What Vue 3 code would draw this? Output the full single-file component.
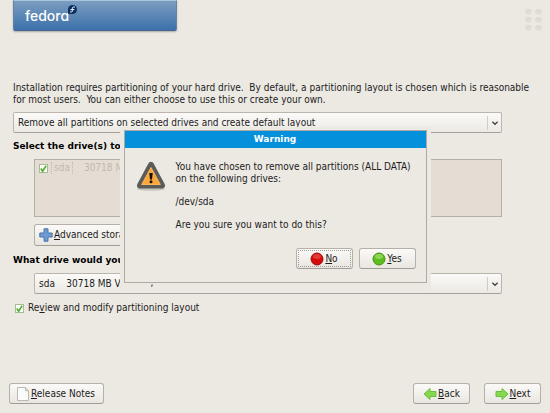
<script setup>
import { ref } from 'vue'

const layout = ref('remove-all')
const bootDrive = ref('sda')
const driveSelected = ref(true)
const review = ref(true)
</script>

<template>
  <div class="installer">
    <header class="top">
      <div class="banner">
        <span class="brand">fedora</span>
        <svg class="bubble" viewBox="0 0 20 20" aria-hidden="true">
          <path d="M10 0a10 10 0 1 1 0 20H2a2 2 0 0 1-2-2v-8A10 10 0 0 1 10 0z" fill="#0b2d63" />
          <path d="M14.5 4.6c-3-1.2-4.800.2-4.800 3v5c0 2.600-1.600 3.800-4.200 3M6.200 10.300h7" fill="none" stroke="#fff" stroke-width="2.2" stroke-linecap="round" />
        </svg>
      </div>
      <div class="dots" aria-hidden="true">
        <i v-for="n in 6" :key="n"></i>
      </div>
    </header>

    <main class="content">
      <p class="intro">Installation requires partitioning of your hard drive.&nbsp; By default, a partitioning layout is chosen which is reasonable for most users.&nbsp; You can either choose to use this or create your own.</p>

      <div class="combo">
        <select v-model="layout" aria-label="Partitioning layout">
          <option value="remove-all">Remove all partitions on selected drives and create default layout</option>
        </select>
        <svg class="chevron" viewBox="0 0 16 16" aria-hidden="true"><path d="M5 6.500l3 3 3-3" /></svg>
      </div>

      <h2 class="first">Select the drive(s) to use for this installation.</h2>
      <div class="indent">
        <div class="drives">
          <label class="drive">
            <span class="check">
              <input v-model="driveSelected" type="checkbox" />
              <svg v-if="driveSelected" viewBox="0 0 10 10" aria-hidden="true"><path d="M2 5l2 3 4-6" /></svg>
            </span>
            <span class="name">sda</span>
            <span class="model">30718 MB</span>
          </label>
        </div>
        <button class="btn advanced" type="button">
          <svg viewBox="0 0 14 14" aria-hidden="true"><path d="M5 .8h4V5h4.200v4H9v4.200H5V9H.8V5H5z" fill="#6f9bd0" stroke="#4776ac" /></svg>
          <span><u>A</u>dvanced storage configuration</span>
        </button>
      </div>

      <h2 class="second">What drive would you like to boot this installation from?</h2>
      <div class="indent">
        <div class="combo">
          <select v-model="bootDrive" aria-label="Boot drive">
            <option value="sda">sda&nbsp;&nbsp;&nbsp; 30718 MB VMware, VMware Virtual S</option>
          </select>
          <svg class="chevron" viewBox="0 0 16 16" aria-hidden="true"><path d="M5 6.500l3 3 3-3" /></svg>
        </div>
      </div>

      <label class="review">
        <span class="check">
          <input v-model="review" type="checkbox" />
          <svg v-if="review" viewBox="0 0 10 10" aria-hidden="true"><path d="M2 5l2 3 4-6" /></svg>
        </span>
        <span>Re<u>v</u>iew and modify partitioning layout</span>
      </label>
    </main>

    <footer class="actions">
      <button class="btn notes" type="button">
        <svg viewBox="0 0 14 14" aria-hidden="true">
          <path d="M1.500.5h8l3 3.500v9.500h-11z" fill="#fbfbfa" stroke="#b9b8b4" />
          <path d="M9.500.5V4h3z" fill="#dcdbd7" stroke="#b9b8b4" stroke-width=".7" />
        </svg>
        <span><u>R</u>elease Notes</span>
      </button>
      <div class="nav">
        <button class="btn" type="button">
          <svg viewBox="0 0 14 14" aria-hidden="true"><path d="M1 7l6-5.500v3h6v5H7v3z" fill="#85d94c" stroke="#6dbd40" /></svg>
          <span><u>B</u>ack</span>
        </button>
        <button class="btn" type="button">
          <svg viewBox="0 0 14 14" aria-hidden="true"><path d="M13 7L7 1.500v3H1v5h6v3z" fill="#85d94c" stroke="#6dbd40" /></svg>
          <span><u>N</u>ext</span>
        </button>
      </div>
    </footer>

    <div class="overlay">
      <section class="dialog" role="alertdialog" aria-labelledby="dialog-title">
        <h1 id="dialog-title">Warning</h1>
        <div class="message">
          <svg class="warn" viewBox="0 0 30 30" aria-hidden="true">
            <ellipse cx="15" cy="28" rx="14" ry="1.800" fill="#c9c6bf" />
            <path d="M15 4L26 24.500H4z" fill="#5b5c58" stroke="#5b5c58" stroke-width="6" stroke-linejoin="round" />
            <path d="M15 6.500L24.300 23.500H5.700z" fill="#f9a73b" stroke="#fbb65a" stroke-linejoin="round" />
            <path d="M13.300 12h3.400l-.7 6.500h-2z" fill="#111" />
            <circle cx="15" cy="20.700" r="1.500" fill="#111" />
          </svg>
          <div class="text">
            <p>You have chosen to remove all partitions (ALL DATA) on the following drives:</p>
            <p>/dev/sda</p>
            <p>Are you sure you want to do this?</p>
          </div>
        </div>
        <div class="answers">
          <button class="btn focused" type="button">
            <svg viewBox="0 0 14 14" aria-hidden="true">
              <circle cx="7" cy="7" r="6" fill="#d40b0b" stroke="#a30808" />
              <ellipse cx="7" cy="4.500" rx="4" ry="2.500" fill="#ef5a55" opacity=".6" />
            </svg>
            <span><u>N</u>o</span>
          </button>
          <button class="btn" type="button">
            <svg viewBox="0 0 14 14" aria-hidden="true">
              <circle cx="7" cy="7" r="6" fill="#5cbd1c" stroke="#469214" />
              <ellipse cx="7" cy="4.500" rx="4" ry="2.500" fill="#a4e070" opacity=".7" />
            </svg>
            <span><u>Y</u>es</span>
          </button>
        </div>
        <span class="remnant" aria-hidden="true">,</span>
      </section>
    </div>
  </div>
</template>

<style>
body {
  background: #ece9e3;
}
</style>

<style scoped>
.installer {
  position: relative;
  display: flex;
  flex-direction: column;
  box-sizing: border-box;
  min-height: 100vh;
  background: #ece9e3;
  color: #1c1c1c;
  font: 10px/12px "DejaVu Sans Condensed", "DejaVu Sans", sans-serif;
}

.top {
  display: flex;
  justify-content: space-between;
  height: 32px;
  padding: 0 8px 0 13px;
}

.banner {
  display: flex;
  box-sizing: border-box;
  width: 164px;
  height: 31px;
  padding: 4px 0 0 11px;
  border: 1px solid #6484a6;
  border-top-color: #a9c5df;
  border-bottom-color: #48698c;
  border-radius: 0 0 2px 2px;
  background: linear-gradient(#7c9dc0, #3b71ab);
  box-shadow: 0 1px 2px #aaa9a5;
}

.brand {
  color: #fff;
  font: 500 14px/22px Inter, sans-serif;
  font-feature-settings: "cv11";
}

.bubble {
  width: 9px;
  height: 9px;
  margin-left: -1px;
}

.dots {
  display: grid;
  grid-template-columns: repeat(2, 7px);
  grid-auto-rows: 6px;
  gap: 2px 3px;
  padding-top: 9px;
}

.dots i {
  border-radius: 50%;
  background: linear-gradient(#dbd8d2, #e4e1db);
}

.content {
  flex: 1;
  padding: 50px 48px 0 13px;
}

.intro {
  margin: 0 -36px 6px 0;
}

.combo {
  display: grid;
  align-items: center;
}

.combo > * {
  grid-area: 1 / 1;
}

.combo select {
  appearance: none;
  width: 100%;
  height: 21px;
  padding: 0 20px 0 4px;
  border: 1px solid #bab6ae;
  border-bottom-color: #a5a19a;
  border-radius: 2px;
  background: linear-gradient(#fbfaf8, #ece9e4);
  color: inherit;
  font: inherit;
}

.chevron {
  justify-self: end;
  width: 14px;
  height: 14px;
  border-left: 1px solid #cfccc5;
  pointer-events: none;
}

.chevron path {
  fill: none;
  stroke: #444;
  stroke-width: 1.5;
}

h2 {
  margin: 0;
  color: #000;
  font: bold 9px/12px "DejaVu Sans", sans-serif;
}

.first {
  padding: 7px 0;
}

.second {
  padding: 8px 0 7px;
}

.indent {
  padding-left: 21px;
}

.drives {
  box-sizing: border-box;
  height: 58px;
  margin-bottom: 7px;
  padding: 2px 4px;
  border: 1px solid #b4afa7;
  background: #e5ddd4;
}

.drive,
.review {
  display: flex;
  align-items: center;
}

.drive {
  color: #bfb9b0;
}

.check {
  display: grid;
  flex: none;
  width: 9px;
  height: 9px;
}

.check > * {
  grid-area: 1 / 1;
  width: 9px;
  height: 9px;
}

.check input {
  appearance: none;
  box-sizing: border-box;
  margin: 0;
  border: 1px solid #a4bd94;
  background: #fff;
}

.check path {
  fill: none;
  stroke: #4fae2c;
  stroke-width: 1.8;
}

.check svg {
  pointer-events: none;
}

.name {
  margin-left: 3px;
  padding: 0 2px;
  border: 1px dotted #c0bab1;
  border-width: 0 1px;
}

.model {
  margin-left: 11px;
}

.review {
  gap: 4px;
  padding: 8px 0 0 2px;
}

.btn {
  display: flex;
  align-items: center;
  justify-content: center;
  gap: 1px;
  box-sizing: border-box;
  min-width: 57px;
  height: 21px;
  margin: 0;
  padding: 0 6px;
  border: 1px solid #b5b1a9;
  border-bottom-color: #a19d96;
  border-radius: 3px;
  background: linear-gradient(#fbfaf8, #e9e6e0);
  color: inherit;
  font: inherit;
}

.btn svg {
  flex: none;
  width: 14px;
  height: 14px;
}

.advanced {
  height: 22px;
  padding: 0 4px;
}

.notes {
  padding: 0 8px 0 6px;
}

.actions {
  display: flex;
  justify-content: space-between;
  padding: 0 9px 9px;
}

.nav {
  display: flex;
  gap: 14px;
}

.overlay {
  position: absolute;
  inset: 0;
  display: grid;
  place-items: center;
}

.dialog {
  position: relative;
  isolation: isolate;
  box-sizing: border-box;
  width: 303px;
  border: 1px solid #aeaaa3;
  background: #ece9e3;
}

.dialog::before {
  content: "";
  position: absolute;
  z-index: -1;
  inset: -4px -5px -9px;
  background: #ece9e3;
}

.dialog::after {
  content: "";
  position: absolute;
  z-index: -1;
  inset: -1px;
  border: 1px solid #aeaaa3;
}

h1 {
  margin: 0;
  background: #0590db;
  color: #fff;
  font: bold 9px/17px "DejaVu Sans", sans-serif;
  text-align: center;
}

.message {
  display: flex;
  gap: 10px;
  padding: 13px 8px 0 11px;
}

.warn {
  flex: none;
  width: 30px;
  height: 30px;
}

.text p {
  margin: 0 0 11px;
}

.answers {
  display: flex;
  justify-content: flex-end;
  gap: 6px;
  padding: 6px 10px 13px;
}

.focused {
  outline: 1px dotted #a09c95;
  outline-offset: -3px;
}

.remnant {
  position: absolute;
  bottom: -7px;
  left: 26px;
}
</style>
